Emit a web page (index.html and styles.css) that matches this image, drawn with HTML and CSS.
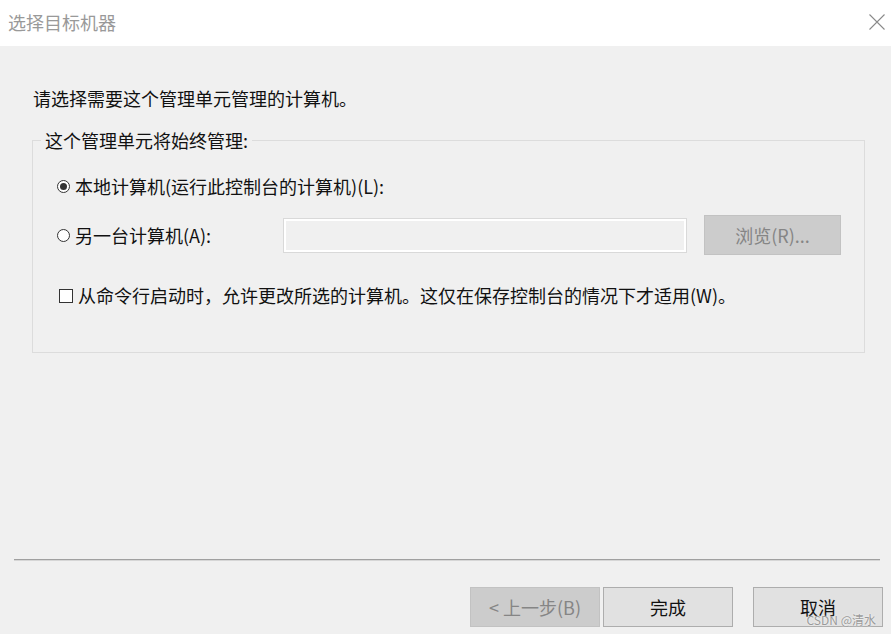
FILE: index.html
```html
<!DOCTYPE html>
<html lang="zh-CN">
<head>
    <meta charset="UTF-8">
    <title>选择目标机器</title>
    <link rel="stylesheet" href="styles.css">
</head>
<body>
    <div class="window">
        <div class="titlebar">
            <span class="title">选择目标机器</span>
            <svg class="close" width="16" height="16" viewBox="0 0 16 16">
                <path d="M0.5 0.5 L15.5 15.5 M15.5 0.5 L0.5 15.5" stroke="#8a8a8a" stroke-width="1.1" fill="none"/>
            </svg>
        </div>

        <div class="main">
            <p class="intro">请选择需要这个管理单元管理的计算机。</p>

            <fieldset class="group">
                <legend>这个管理单元将始终管理:</legend>

                <div class="group-body">
                    <div class="row row-local">
                        <span class="radio checked"></span>
                        <span>本地计算机(运行此控制台的计算机)(L):</span>
                    </div>

                    <div class="row row-other">
                        <div class="other-label">
                            <span class="radio"></span>
                            <span>另一台计算机(A):</span>
                        </div>
                        <div class="textbox"></div>
                        <div class="btn btn-browse disabled">浏览(R)...</div>
                    </div>

                    <div class="row row-check">
                        <span class="checkbox"></span>
                        <span>从命令行启动时，允许更改所选的计算机。这仅在保存控制台的情况下才适用(W)。</span>
                    </div>
                </div>
            </fieldset>
        </div>

        <div class="footer">
            <div class="separator"></div>
            <div class="buttons">
                <div class="btn disabled">&lt; 上一步(B)</div>
                <div class="btn">完成</div>
                <div class="btn btn-cancel">取消</div>
            </div>
            <span class="watermark">CSDN @清水</span>
        </div>
    </div>
</body>
</html>
```

FILE: styles.css
```css
html, body {
    margin: 0;
    padding: 0;
}
body {
    font-family: "Noto Sans CJK SC", "Noto Sans", sans-serif;
    font-size: 18px;
    color: #111;
    background: #f0f0f0;
}
.window {
    width: 891px;
    height: 634px;
    display: flex;
    flex-direction: column;
    position: relative;
}

/* title bar */
.titlebar {
    height: 46px;
    background: #fff;
    display: flex;
    align-items: center;
    justify-content: space-between;
    padding: 0 6px 0 8px;
}
.title {
    color: #999;
    font-size: 18px;
    line-height: 24px;
    margin-top: -2px;
}
.close {
    margin-top: -2px;
}

/* main area */
.main {
    flex: 1;
    padding: 0 26px 0 32px;
}
.intro {
    margin: 40px 0 0 1px;
    line-height: 24px;
}
.group {
    margin: 18px 0 0 0;
    padding: 20px 0 45px 0;
    border: 1px solid #dcdcdc;
    min-width: 0;
}
.group legend {
    margin-left: 8px;
    padding: 0 4px;
    line-height: 24px;
}
.group-body {
    padding-left: 24px;
}
.row {
    display: flex;
    align-items: center;
    line-height: 24px;
}
.row-local {
    height: 28px;
}
.row-other {
    height: 40px;
    margin-top: 15px;
}
.row-check {
    margin-top: 28px;
    padding-left: 2px;
}
.other-label {
    width: 226px;
    display: flex;
    align-items: center;
}

.radio {
    width: 13px;
    height: 13px;
    border: 1px solid #333;
    border-radius: 50%;
    box-sizing: border-box;
    margin-right: 5px;
    position: relative;
    flex: none;
    background: #fff;
}
.radio.checked::after {
    content: "";
    position: absolute;
    left: 2px;
    top: 2px;
    width: 7px;
    height: 7px;
    border-radius: 50%;
    background: #333;
}
.checkbox {
    width: 14px;
    height: 14px;
    border: 1px solid #333;
    box-sizing: border-box;
    background: #fff;
    margin-right: 5px;
    margin-top: 2px;
    flex: none;
}

.textbox {
    width: 404px;
    height: 35px;
    box-sizing: border-box;
    border: 1px solid #d9d9d9;
    box-shadow: inset 0 0 0 2px #fff;
    background: #f0f0f0;
}

/* buttons */
.btn {
    width: 130px;
    height: 40px;
    box-sizing: border-box;
    border: 1px solid #adadad;
    background: #e1e1e1;
    display: flex;
    align-items: center;
    justify-content: center;
    color: #111;
}
.btn.disabled {
    background: #cccccc;
    border-color: #c2c2c2;
    color: #858585;
}
.btn-browse {
    width: 137px;
    margin-left: 17px;
}

/* footer */
.footer {
    height: 75px;
    flex: none;
}
.separator {
    margin: 0 11px 0 14px;
    border-top: 1px solid #a0a0a0;
    border-bottom: 1px solid #d6d6d6;
}
.buttons {
    display: flex;
    justify-content: flex-end;
    gap: 3px;
    margin-top: 26px;
    padding-right: 8px;
}
.btn-cancel {
    margin-left: 17px;
}
.watermark {
    position: absolute;
    right: 15px;
    bottom: 7px;
    font-size: 12px;
    line-height: 14px;
    color: #9a9a9a;
    text-shadow: 0 0 2px #fff;
}
```
